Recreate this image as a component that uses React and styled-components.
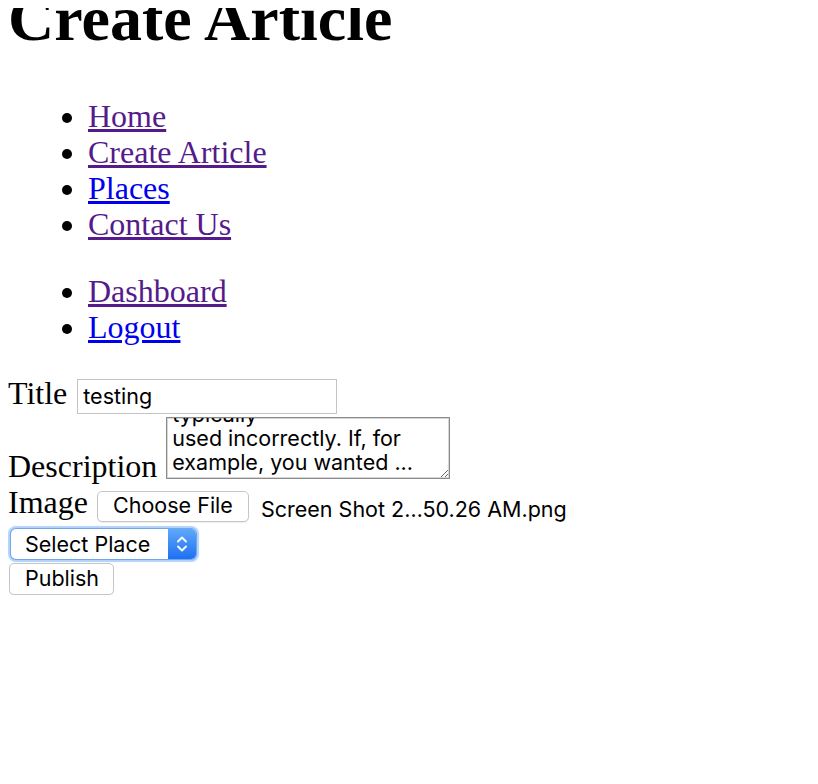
import React, { useEffect, useRef } from "react";
import styled, { createGlobalStyle } from "styled-components";

const GlobalStyle = createGlobalStyle`
  html { margin: 0; padding: 0; background: #fff; }
  body {
    margin: 8px;
    font-family: "Liberation Serif", "Times New Roman", serif;
    font-size: 32px;
    line-height: 36px;
    color: #000;
    background: #fff;
  }
`;

const SANS = `"Inter", "Liberation Sans", Arial, sans-serif`;

const Heading = styled.h1`
  font-size: 64px;
  line-height: 74px;
  font-weight: bold;
  margin: -26px 0 42px;
`;

const NavList = styled.ul`
  margin: ${(p) => p.$top || 0}px 0 0;
  padding-left: 80px;
  list-style: disc;
`;

const NavLink = styled.a`
  color: ${(p) => (p.$visited ? "#551a8b" : "#0000ee")};
  text-decoration: underline;
`;

const Form = styled.form`
  display: flex;
  flex-direction: column;
  align-items: flex-start;
  margin-top: 30px;
`;

const Row = styled.div`
  display: flex;
  gap: ${(p) => p.$gap || 8}px;
  align-items: ${(p) => p.$align || "baseline"};
  margin-top: ${(p) => p.$top || 0}px;
`;

const Label = styled.label`
  font-size: 32px;
  line-height: 36px;
`;

const TextInput = styled.input`
  box-sizing: border-box;
  width: 260px;
  height: 35px;
  margin: 0;
  padding: 0 5px;
  border: 1px solid #c4c4c4;
  border-radius: 0;
  font-family: ${SANS};
  font-size: 21.5px;
  color: #000;
  background: #fff;
  outline: none;
`;

const TextArea = styled.textarea`
  box-sizing: border-box;
  width: 284px;
  height: 62px;
  margin: 0 0 5px;
  padding: 2px 5px 4px;
  border: 1px solid #8b8b8b;
  box-shadow: inset 0 0 0 1px #d6d6d6;
  font-family: ${SANS};
  font-size: 21.5px;
  line-height: 24px;
  color: #000;
  background: #fff;
  overflow: hidden;
  resize: both;
  outline: none;
`;

const FileControl = styled.div`
  display: flex;
  align-items: flex-start;
  gap: 12px;
`;

const Button = styled.button`
  box-sizing: border-box;
  height: ${(p) => p.$h || 31}px;
  margin: ${(p) => p.$margin || "0"};
  padding: 0 15px;
  border: 1px solid #c6c6c6;
  border-radius: 5px;
  background: #fff;
  box-shadow: 0 1px 1px rgba(0, 0, 0, 0.07);
  font-family: ${SANS};
  font-size: 21.5px;
  line-height: 1;
  color: #000;
  cursor: default;
`;

const FileName = styled.span`
  margin-top: 13px;
  font-family: ${SANS};
  font-size: 21.5px;
  line-height: 24px;
`;

const SelectWrap = styled.div`
  display: flex;
  box-sizing: border-box;
  width: 185px;
  height: 30px;
  margin: 7px 0 0 3px;
  border-radius: 5px;
  overflow: hidden;
  background: #fff;
  box-shadow: 0 0 0 1px #6fa6f0, 0 0 1px 3px rgba(100, 165, 245, 0.5);
`;

const Select = styled.select`
  flex: 1;
  min-width: 0;
  margin: 0;
  padding: 0 0 0 14px;
  border: none;
  background: transparent;
  appearance: none;
  -webkit-appearance: none;
  font-family: ${SANS};
  font-size: 21.5px;
  color: #000;
  outline: none;
`;

const SelectArrow = styled.span`
  display: flex;
  align-items: center;
  justify-content: center;
  width: 28px;
  background: linear-gradient(#5fa9fb, #1d70f1);
`;

function Chevrons() {
  return (
    <svg width="12" height="20" viewBox="0 0 12 20" fill="none">
      <path d="M2 7.5 L6 3.5 L10 7.5" stroke="#fff" strokeWidth="1.8" strokeLinecap="round" strokeLinejoin="round" />
      <path d="M2 12.5 L6 16.5 L10 12.5" stroke="#fff" strokeWidth="1.8" strokeLinecap="round" strokeLinejoin="round" />
    </svg>
  );
}

const DESCRIPTION =
  "Literally is the word that is probably the most always typically\nused incorrectly. If, for example, you wanted ...";

export default function App() {
  const areaRef = useRef(null);

  useEffect(() => {
    const el = areaRef.current;
    if (el) el.scrollTop = el.scrollHeight;
  }, []);

  return (
    <>
      <GlobalStyle />
      <Heading>Create Article</Heading>
      <NavList>
        <li><NavLink href="#" $visited>Home</NavLink></li>
        <li><NavLink href="#" $visited>Create Article</NavLink></li>
        <li><NavLink href="#">Places</NavLink></li>
        <li><NavLink href="#" $visited>Contact Us</NavLink></li>
      </NavList>
      <NavList $top={31}>
        <li><NavLink href="#" $visited>Dashboard</NavLink></li>
        <li><NavLink href="#">Logout</NavLink></li>
      </NavList>
      <Form onSubmit={(e) => e.preventDefault()}>
        <Row $align="baseline" $gap={10}>
          <Label htmlFor="title">Title</Label>
          <TextInput id="title" defaultValue="testing" />
        </Row>
        <Row $align="flex-end" $top={3} $gap={9}>
          <Label htmlFor="desc">Description</Label>
          <TextArea id="desc" ref={areaRef} defaultValue={DESCRIPTION} />
        </Row>
        <Row $align="flex-start" $gap={9}>
          <Label>Image</Label>
          <FileControl>
            <Button type="button" $margin="7px 0 0" style={{ width: 152 }}>Choose File</Button>
            <FileName>Screen Shot 2…50.26 AM.png</FileName>
          </FileControl>
        </Row>
        <SelectWrap>
          <Select defaultValue="">
            <option value="">Select Place</option>
          </Select>
          <SelectArrow><Chevrons /></SelectArrow>
        </SelectWrap>
        <Button type="submit" $h={32} $margin="4px 0 0 1px" style={{ width: 105 }}>Publish</Button>
      </Form>
    </>
  );
}
